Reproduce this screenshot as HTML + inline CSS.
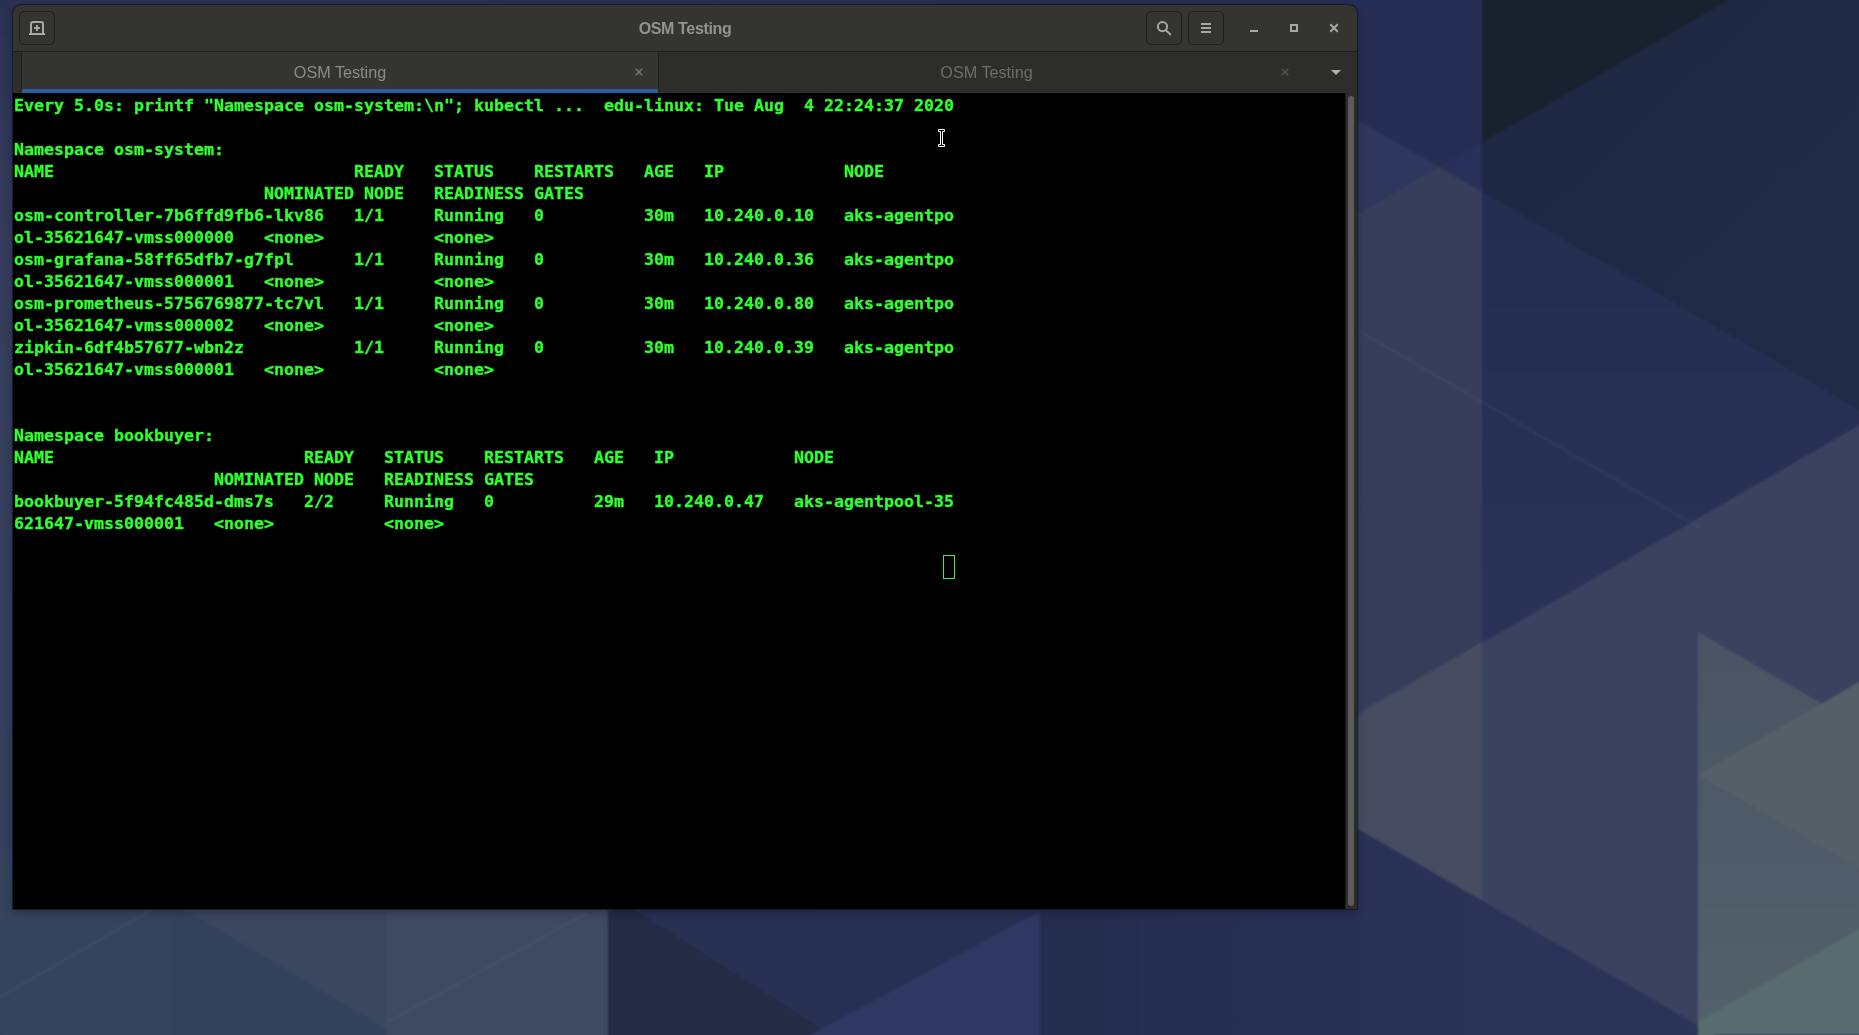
<!DOCTYPE html>
<html lang="en">
<head>
<meta charset="utf-8">
<title>OSM Testing</title>
<style>
html,body{margin:0;padding:0;}
body{width:1859px;height:1035px;overflow:hidden;position:relative;background:#272f52;font-family:"Liberation Sans","DejaVu Sans",sans-serif;}
#wall{position:absolute;left:-20px;top:-20px;width:1899px;height:1075px;display:block;}
#win{position:absolute;left:13px;top:5px;width:1344px;height:904px;border-radius:8px 8px 0 0;background:#000;overflow:hidden;box-shadow:0 0 0 1px rgba(20,22,34,.75),0 3px 10px rgba(10,12,25,.35);}
#hdr{position:absolute;left:0;top:0;width:1344px;height:46px;background:#343530;border-bottom:1px solid #1d1d1b;}
#title{position:absolute;left:0;top:0;width:1344px;height:46px;line-height:46px;text-align:center;color:#92928f;font-weight:bold;font-size:16px;letter-spacing:-0.35px;padding-top:1px;box-sizing:border-box;}
.btn{position:absolute;top:6px;width:34px;height:32px;border:1px solid #1f1f1d;border-radius:5px;background:#343530;}
#icons{position:absolute;left:0;top:0;}
#tabs{position:absolute;left:0;top:47px;width:1344px;height:41px;background:#2d2d2b;}
.tab{position:absolute;top:0;height:41px;line-height:41px;text-align:center;font-size:16.2px;}
#tab1{left:8px;width:636px;background:#343530;color:#8b8b88;border-left:1px solid #1f1f1d;border-right:1px solid #1f1f1d;box-shadow:inset 0 -4px 0 #2a5c9e;}
#tab2{left:646px;width:655px;color:#6d6d6a;}
#term{position:absolute;left:0;top:88px;width:1332px;height:816px;background:#000;}
#txt{position:absolute;left:1px;top:2px;margin:0;font:bold 16.61px/22px "DejaVu Sans Mono","Liberation Mono",monospace;color:#2eff2e;white-space:pre;-webkit-text-stroke:0.35px #2eff2e;}
#cur{position:absolute;left:930px;top:462px;width:10px;height:22px;border:1px solid #48ee48;box-sizing:content-box;}
#sb{position:absolute;left:1332px;top:88px;width:12px;height:816px;background:#2c2c2a;border-left:1px solid #1d1d1b;box-sizing:border-box;}
#thumb{position:absolute;left:2px;top:3px;width:6px;height:810px;border-radius:3px;background:#5b5c59;}
</style>
</head>
<body>
<svg id="wall" width="1899" height="1075" viewBox="-20 -20 1899 1075">
<defs><linearGradient id="gA" gradientUnits="userSpaceOnUse" x1="0" y1="200" x2="0" y2="700"><stop offset="0" stop-color="#383d5b"/><stop offset="1" stop-color="#363d5b"/></linearGradient><linearGradient id="gB" gradientUnits="userSpaceOnUse" x1="0" y1="190" x2="0" y2="650"><stop offset="0" stop-color="#242c50"/><stop offset="1" stop-color="#2b3359"/></linearGradient><linearGradient id="gN" gradientUnits="userSpaceOnUse" x1="1482" y1="0" x2="1859" y2="400"><stop offset="0" stop-color="#1e2742"/><stop offset="1" stop-color="#212a47"/></linearGradient><linearGradient id="gC" gradientUnits="userSpaceOnUse" x1="0" y1="640" x2="0" y2="1035"><stop offset="0" stop-color="#4a5464"/><stop offset="0.6" stop-color="#505c69"/><stop offset="1" stop-color="#54626b"/></linearGradient><linearGradient id="gL" gradientUnits="userSpaceOnUse" x1="0" y1="0" x2="0" y2="1035"><stop offset="0" stop-color="#2a3154"/><stop offset="0.24" stop-color="#363d5c"/><stop offset="0.5" stop-color="#353f5b"/><stop offset="0.85" stop-color="#34425c"/><stop offset="1" stop-color="#34425c"/></linearGradient><linearGradient id="gT" gradientUnits="userSpaceOnUse" x1="0" y1="0" x2="1340" y2="0"><stop offset="0" stop-color="#2c3356"/><stop offset="0.5" stop-color="#293052"/><stop offset="1" stop-color="#262d50"/></linearGradient><linearGradient id="gR" gradientUnits="userSpaceOnUse" x1="1040" y1="0" x2="1482" y2="0"><stop offset="0" stop-color="#252d4e"/><stop offset="0.5" stop-color="#272f54"/><stop offset="1" stop-color="#2b3358"/></linearGradient><filter id="soft" color-interpolation-filters="sRGB" filterUnits="userSpaceOnUse" x="-20" y="-20" width="1899" height="1075"><feGaussianBlur stdDeviation="1.2"/></filter><g id="wp">
<rect width="1859" height="1035" fill="#272f52"/>
<polygon points="1340.0,0.0 1482.0,0.0 1482.0,1035.0 1340.0,1035.0" fill="#262e55"/>
<polygon points="1340.0,110.0 1438.0,166.6 1340.0,225.0" fill="#2e375e"/>
<polygon points="1438.0,166.6 1482.0,143.0 1482.0,192.0" fill="#29315a"/>
<polygon points="1340.0,225.0 1438.0,166.6 1482.0,192.0 1482.0,643.0 1340.0,725.0" fill="url(#gA)"/>
<polygon points="1340.0,725.0 1482.0,643.0 1482.0,901.0 1340.0,819.0" fill="#474c61"/>
<polygon points="1340.0,819.0 1482.0,901.0 1482.0,1035.0 1340.0,1035.0" fill="#2b3358"/>
<polygon points="1482.0,0.0 1859.0,0.0 1859.0,1035.0 1482.0,1035.0" fill="url(#gB)"/>
<polygon points="1482.0,0.0 1729.7,0.0 1482.0,143.0" fill="#18222f"/>
<polygon points="1482.0,143.0 1729.7,0.0 1859.0,0.0 1859.0,409.7 1482.0,192.0" fill="url(#gN)"/>
<polygon points="1482.0,643.0 1859.0,425.3 1859.0,1035.0 1698.0,1025.7 1482.0,901.0" fill="#3a4260"/>
<polygon points="1482.0,901.0 1698.0,1025.7 1859.0,1118.7 1859.0,1035.0 1482.0,1035.0" fill="#2b3358"/>
<polygon points="1698.0,632.0 1859.0,725.0 1859.0,1035.0 1698.0,1035.0" fill="url(#gC)"/>
<polygon points="1698.0,775.0 1859.0,682.0 1859.0,868.0" fill="#555f68"/>
<polygon points="1698.0,1022.0 1859.0,929.0 1859.0,1035.0 1698.0,1035.0" fill="#586b6e"/>
<polygon points="0.0,0.0 1340.0,0.0 1340.0,1035.0 0.0,1035.0" fill="#272f52"/>
<polygon points="0.0,0.0 40.0,0.0 40.0,1035.0 0.0,1035.0" fill="url(#gL)"/>
<polygon points="40.0,0.0 1340.0,0.0 1340.0,40.0 40.0,40.0" fill="url(#gT)"/>
<polygon points="0.0,880.0 171.0,880.0 171.0,1035.0 0.0,1035.0" fill="#35435c"/>
<polygon points="171.0,880.0 386.0,880.0 386.0,1035.0 171.0,1035.0" fill="#34425c"/>
<polygon points="171.0,880.0 386.0,880.0 386.0,1029.0 135.0,880.0" fill="#3a475f"/>
<polygon points="386.0,880.0 608.0,880.0 608.0,1035.0 386.0,1035.0" fill="#3d4a62"/>
<polygon points="608.0,880.0 824.0,880.0 824.0,1035.0 608.0,1035.0" fill="#283154"/>
<polygon points="608.0,893.0 608.0,1035.0 824.0,1035.0 824.0,1030.0" fill="#232b45"/>
<polygon points="824.0,880.0 1040.0,880.0 1040.0,1035.0 824.0,1035.0" fill="#272f52"/>
<polygon points="810.0,1035.0 1040.0,911.0 1040.0,1035.0" fill="#2e3862"/>
<polygon points="1040.0,880.0 1340.0,880.0 1340.0,1035.0 1040.0,1035.0" fill="url(#gR)"/>
<polygon points="1340.0,819.0 1482.0,901.0 1482.0,1035.0 1340.0,1035.0" fill="url(#gR)"/>
<path d="M0 997L150 911M388 1022L587 913M1359 331L1482 402M1357 714L1482 643M1482 402L1698 527" stroke="#8fa0a8" stroke-opacity=".16" stroke-width="1.2" fill="none"/>
</g></defs>
<rect x="-20" y="-20" width="1899" height="1075" fill="#272f52"/>
<g filter="url(#soft)"><use href="#wp" transform="scale(-1,1)"/><use href="#wp" transform="translate(3718,0) scale(-1,1)"/><use href="#wp" transform="scale(1,-1)"/><use href="#wp" transform="translate(0,2070) scale(1,-1)"/><use href="#wp"/></g>
</svg>
<div id="win">
 <div id="hdr">
  <div id="title">OSM Testing</div>
  <div class="btn" style="left:6px"></div>
  <div class="btn" style="left:1133px"></div>
  <div class="btn" style="left:1175px"></div>
 </div>
 <div id="tabs">
  <div class="tab" id="tab1">OSM Testing</div>
  <div class="tab" id="tab2">OSM Testing</div>
 </div>
 <svg id="icons" width="1344" height="88" viewBox="0 0 1344 88">
  <g fill="none" stroke="#a6a8a8" stroke-width="2">
   <path d="M18 29V19a2 2 0 0 1 2-2h8a2 2 0 0 1 2 2V29"/>
   <circle cx="1149.5" cy="21.6" r="4.6"/>
   <path d="M1153.2 25.6L1157.4 29.4" stroke-linecap="round"/>
   <rect x="1278" y="20" width="6" height="6"/>
   <path d="M1318 20l6 6M1324 20l-6 6" stroke-linecap="square"/>
  </g>
  <g fill="#a6a8a8">
   <rect x="16" y="28" width="16" height="2"/>
   <rect x="21" y="22" width="6" height="2"/><rect x="23" y="20" width="2" height="6"/>
   <rect x="1188" y="18" width="10" height="2"/><rect x="1188" y="22" width="10" height="2"/><rect x="1188" y="26" width="10" height="2"/>
   <rect x="1237" y="25" width="8" height="2"/>
   <path d="M1318 65h10l-5 5z" fill="#b0b2b2"/>
  </g>
  <path d="M622.7 63.7l6.6 6.6M629.3 63.7l-6.6 6.6" stroke="#787875" stroke-width="1.5" fill="none"/>
  <path d="M1268.7 63.7l6.6 6.6M1275.3 63.7l-6.6 6.6" stroke="#545451" stroke-width="1.5" fill="none"/>
 </svg>
 <div id="term">
<pre id="txt">Every 5.0s: printf "Namespace osm-system:\n"; kubectl ...  edu-linux: Tue Aug  4 22:24:37 2020

Namespace osm-system:
NAME                              READY   STATUS    RESTARTS   AGE   IP            NODE
                         NOMINATED NODE   READINESS GATES
osm-controller-7b6ffd9fb6-lkv86   1/1     Running   0          30m   10.240.0.10   aks-agentpo
ol-35621647-vmss000000   &lt;none&gt;           &lt;none&gt;
osm-grafana-58ff65dfb7-g7fpl      1/1     Running   0          30m   10.240.0.36   aks-agentpo
ol-35621647-vmss000001   &lt;none&gt;           &lt;none&gt;
osm-prometheus-5756769877-tc7vl   1/1     Running   0          30m   10.240.0.80   aks-agentpo
ol-35621647-vmss000002   &lt;none&gt;           &lt;none&gt;
zipkin-6df4b57677-wbn2z           1/1     Running   0          30m   10.240.0.39   aks-agentpo
ol-35621647-vmss000001   &lt;none&gt;           &lt;none&gt;


Namespace bookbuyer:
NAME                         READY   STATUS    RESTARTS   AGE   IP            NODE
                    NOMINATED NODE   READINESS GATES
bookbuyer-5f94fc485d-dms7s   2/2     Running   0          29m   10.240.0.47   aks-agentpool-35
621647-vmss000001   &lt;none&gt;           &lt;none&gt;</pre>
  <div id="cur"></div>
 </div>
 <div id="sb"><div id="thumb"></div></div>
</div>
<svg id="ptr" width="12" height="22" viewBox="0 0 12 22" style="position:absolute;left:936px;top:127px">
<path d="M2.5 2.5H8.5V4.5H6.5V17.5H8.5V19.5H2.5V17.5H4.5V4.5H2.5Z" fill="#000" stroke="#fff" stroke-width="1" stroke-linejoin="round"/>
</svg>
</body>
</html>
